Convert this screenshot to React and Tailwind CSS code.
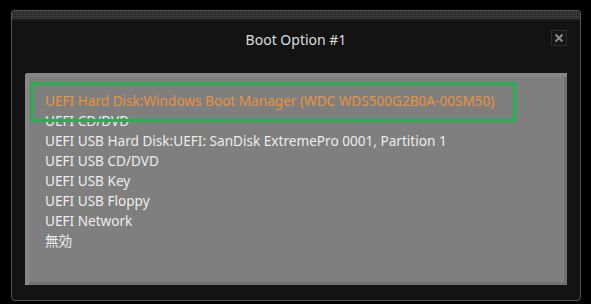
import React from 'react'

const options = [
  'UEFI Hard Disk:Windows Boot Manager (WDC WDS500G2B0A-00SM50)',
  'UEFI CD/DVD',
  'UEFI USB Hard Disk:UEFI: SanDisk ExtremePro 0001, Partition 1',
  'UEFI USB CD/DVD',
  'UEFI USB Key',
  'UEFI USB Floppy',
  'UEFI Network',
  '無効',
]

export default function App() {
  const selected = 0

  return (
    <div
      className="w-[591px] h-[304px] bg-black overflow-hidden pt-[10px] pl-[11px]"
      style={{ fontFamily: '"Noto Sans", "Noto Sans CJK JP", sans-serif' }}
    >
      {/* Dialog */}
      <div className="relative w-[570px] h-[291px] border border-[#575757] rounded-b-[4px] rounded-tl-[3px] rounded-tr-[3px] bg-[#131313] flex flex-col">
        {/* dotted top strip */}
        <div className="h-[8px] bg-[#1e1e1e] bg-[image:linear-gradient(90deg,#3a3a3a_1px,transparent_1px),linear-gradient(0deg,#3a3a3a_1px,transparent_1px)] bg-[length:2px_2px]" />
        <div className="h-[2px] bg-[#1a1a1a]" />

        {/* Title */}
        <div className="relative h-[52px] flex justify-center pt-[9px]">
          <span className="text-[14px] leading-[20px] text-[#dedede]">Boot Option #1</span>
          <button className="absolute right-[13px] top-[9px] w-[16px] h-[16px] border border-[#2c2c2c] bg-[#161616] flex items-center justify-center">
            <svg width="10" height="10" viewBox="0 0 10 10">
              <path d="M1.5 1.5 L8.5 8.5 M8.5 1.5 L1.5 8.5" stroke="#8a8a8a" strokeWidth="2" />
            </svg>
          </button>
        </div>

        {/* List */}
        <div className="relative mx-[13px] h-[212px] bg-[#7f7f7f] rounded-tl-[3px] shadow-[inset_4px_4px_0_#878787,inset_-3px_-3px_0_#717171] pt-[18px] pl-[20px]">
          {options.map((opt, i) => (
            <div
              key={opt}
              className={`h-[20px] leading-[20px] text-[13.6px] whitespace-nowrap ${
                i === selected ? 'text-[#e8923c]' : 'text-[#ececec]'
              }`}
            >
              {opt}
            </div>
          ))}
          <div className="absolute left-[5px] top-[9px] w-[486px] h-[40px] border-[3px] border-[#22b14c]" />
        </div>
      </div>

      {/* row behind the dialog */}
      <div className="flex text-[13px] text-[#9a9a9a] leading-[20px] -mt-[1px]">
        <span className="ml-[42px]">Boot Option #2</span>
        <span className="ml-[241px]">UEFI CD/DVD</span>
      </div>
    </div>
  )
}
